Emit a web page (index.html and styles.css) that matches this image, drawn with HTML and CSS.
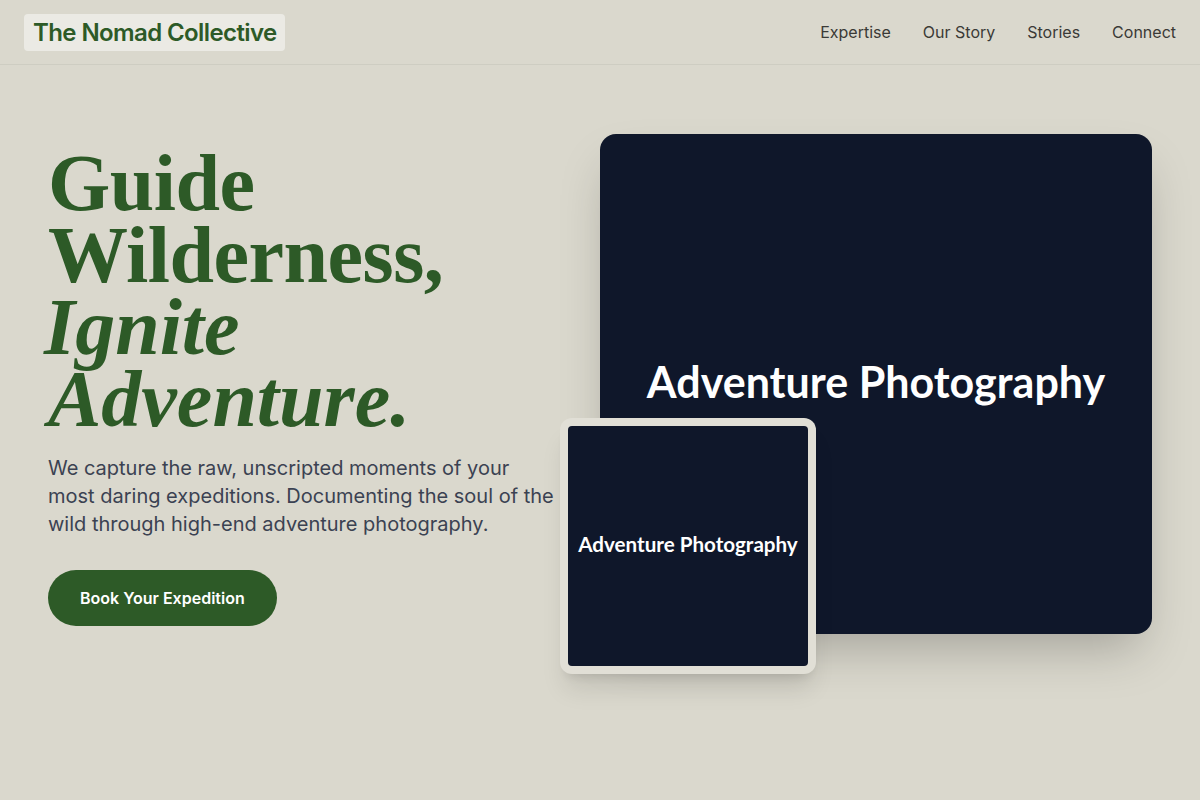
FILE: index.html
```html
<!DOCTYPE html>
<html lang="en">
<head>
<meta charset="utf-8">
<title>The Nomad Collective</title>
<link rel="stylesheet" href="styles.css">
</head>
<body>
<header class="site-header">
  <a class="logo" href="#">The Nomad Collective</a>
  <nav class="nav">
    <a href="#">Expertise</a>
    <a href="#">Our Story</a>
    <a href="#">Stories</a>
    <a href="#">Connect</a>
  </nav>
</header>
<main class="hero">
  <section class="hero-text">
    <h1 class="headline">Guide<br>Wilderness,<br><em>Ignite<br>Adventure.</em></h1>
    <p class="lead">We capture the raw, unscripted moments of your most daring expeditions. Documenting the soul of the wild through high-end adventure photography.</p>
    <a class="btn" href="#">Book Your Expedition</a>
  </section>
  <section class="hero-media">
    <div class="photo photo-main"><span>Adventure Photography</span></div>
    <div class="photo-frame">
      <div class="photo photo-small"><span>Adventure Photography</span></div>
    </div>
  </section>
</main>
</body>
</html>
```
FILE: styles.css
```css
* { box-sizing: border-box; }
html, body { margin: 0; padding: 0; }
body {
  background: #dad8cd;
  font-family: Inter, "Noto Sans", sans-serif;
  color: #374151;
  min-height: 800px;
}
a { text-decoration: none; }

.site-header {
  height: 65px;
  display: flex;
  align-items: center;
  justify-content: space-between;
  padding: 0 24px;
  border-bottom: 1px solid rgba(0,0,0,0.05);
}
.logo {
  display: block;
  background: #ebeae4;
  color: #2d5a27;
  font-weight: 600;
  font-size: 24px;
  line-height: 29px;
  padding: 4px 8px 4px 9px;
  border-radius: 4px;
  letter-spacing: -0.6px;
}
.nav { display: flex; gap: 32px; }
.nav a {
  color: #3a3a36;
  font-size: 16px;
  line-height: 20px;
}

.hero {
  display: flex;
  align-items: flex-start;
  padding: 69px 48px 0;
}
.hero-text {
  width: 508px;
  flex: none;
  padding-top: 13px;
}
.headline {
  margin: 0;
  font-family: "Liberation Serif", "Times New Roman", serif;
  font-weight: 700;
  font-size: 80px;
  line-height: 72px;
  color: #2d5a27;
  letter-spacing: -0.5px;
}
.headline em { font-style: italic; margin-left: -4px; letter-spacing: 0; }
.lead {
  margin: 19px 0 0;
  font-size: 20px;
  line-height: 28px;
  color: #3b4252;
}
.btn {
  display: inline-block;
  margin-top: 32px;
  background: #2d5a27;
  color: #fff;
  font-weight: 600;
  font-size: 16px;
  line-height: 20px;
  padding: 18px 32px;
  border-radius: 999px;
}

.hero-media {
  position: relative;
  flex: 1;
  margin-left: 44px;
}
.photo {
  background: #0f172a;
  color: #fff;
  display: flex;
  align-items: center;
  justify-content: center;
  font-family: Lato, "Open Sans", sans-serif;
  font-weight: 700;
}
.photo-main {
  height: 500px;
  border-radius: 16px;
  font-size: 43px;
  box-shadow: 0 25px 50px -12px rgba(0,0,0,0.25);
  padding-bottom: 6px;
}
.photo-frame {
  position: absolute;
  left: -40px;
  bottom: -40px;
  width: 256px;
  height: 256px;
  padding: 8px;
  background: #e1dfd6;
  border-radius: 12px;
  box-shadow: 0 20px 25px -5px rgba(0,0,0,0.1), 0 8px 10px -6px rgba(0,0,0,0.1);
}
.photo-small {
  width: 100%;
  height: 100%;
  border-radius: 4px;
  font-size: 20.6px;
  padding-bottom: 4px;
}
```
